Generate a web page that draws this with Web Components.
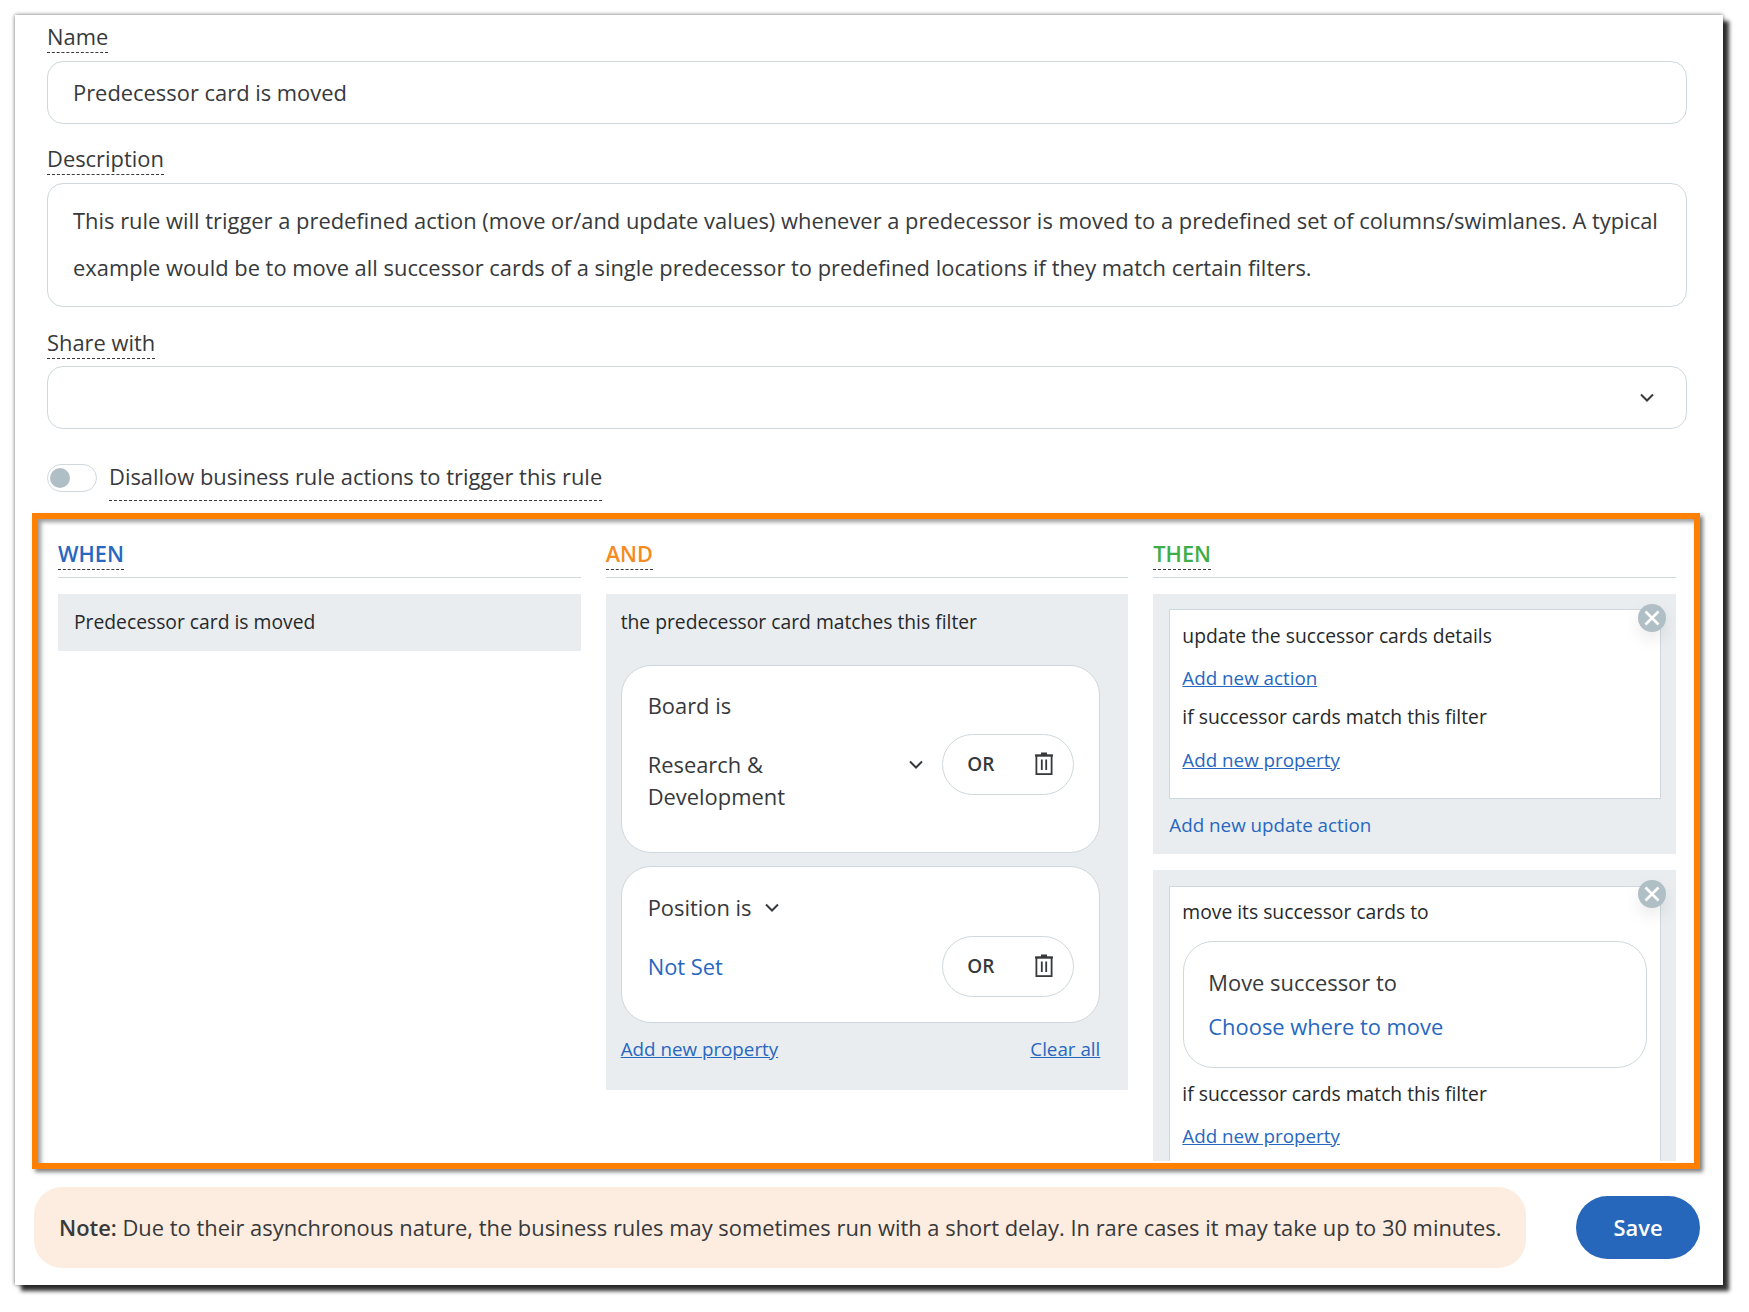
<!DOCTYPE html>
<html lang="en">
<head>
<meta charset="utf-8">
<title>Business rule</title>
<style>
    html, body { margin: 0; background: #fff; }
    body { display: flow-root; min-height: 1312px; font: 21.9px/32px "Open Sans", "Liberation Sans", sans-serif; color: #37393b; }
</style>
</head>
<body>
<rule-window>
    <rule-field label="Name" value="Predecessor card is moved" below="19" drop="8"></rule-field>
    <rule-field label="Description" multi below="20" drop="8" value="This rule will trigger a predefined action (move or/and update values) whenever a predecessor is moved to a predefined set of columns/swimlanes. A typical example would be to move all successor cards of a single predecessor to predefined locations if they match certain filters."></rule-field>
    <rule-field label="Share with" select below="0" drop="7"></rule-field>
    <rule-toggle>Disallow business rule actions to trigger this rule</rule-toggle>
    <rule-board>
        <rule-column heading="WHEN" color="#2767c0">
            <rule-panel plain>Predecessor card is moved</rule-panel>
        </rule-column>
        <rule-column heading="AND" color="#f58a1f">
            <rule-panel filter>
                <span class="title">the predecessor card matches this filter</span>
                <filter-card title="Board is" value="Research &amp; Development" value-chevron></filter-card>
                <filter-card title="Position is" value="Not Set" title-chevron link></filter-card>
                <panel-links></panel-links>
            </rule-panel>
        </rule-column>
        <rule-column heading="THEN" color="#3fae49">
            <action-panel footer="Add new update action" close-top="-6">
                <action-row strong>update the successor cards details</action-row>
                <action-row link gap="14">Add new action</action-row>
                <action-row strong gap="11">if successor cards match this filter</action-row>
                <action-row link gap="15" after="24">Add new property</action-row>
            </action-panel>
            <action-panel top="16" close-top="-7" second>
                <action-row strong first="11">move its successor cards to</action-row>
                <move-box></move-box>
                <action-row strong gap="12">if successor cards match this filter</action-row>
                <action-row link gap="14" after="40">Add new property</action-row>
            </action-panel>
        </rule-column>
    </rule-board>
    <rule-footer>
        <b>Note:</b> Due to their asynchronous nature, the business rules may sometimes run with a short delay. In rare cases it may take up to 30 minutes.
    </rule-footer>
</rule-window>

<script>
const CHEVRON = `<svg width="16" height="10" viewBox="0 0 16 10" fill="none" stroke="#37393b" stroke-width="2"><path d="M2 1.5 8 7.5 14 1.5"/></svg>`;
const TRASH = `<svg width="20" height="24" viewBox="0 0 20 24" fill="none" stroke="#37393b" stroke-width="1.8"><path d="M1 3.5H19M7 1.5H13"/><rect x="2.4" y="3.5" width="15.2" height="18.6"/><path d="M7.8 7.5V18M12.2 7.5V18"/></svg>`;
const DASHED = "border-bottom: 1px dashed #37393b;";

class BaseElement extends HTMLElement {
    constructor() {
        super();
        this.attachShadow({ mode: "open" });
    }

    connectedCallback() {
        this.shadowRoot.innerHTML = this.markup();
    }
}

class RuleWindow extends BaseElement {
    markup() {
        return `
            <style>
                :host {
                    display: block;
                    box-sizing: border-box;
                    width: 1708px;
                    height: 1270px;
                    margin: 15px 0 0 15px;
                    padding-top: 6px;
                    background: #fff;
                    box-shadow: 6px 6px 4px rgba(0,0,0,0.8), 0 0 4px rgba(0,0,0,0.6);
                }
            </style>
            <slot></slot>
        `;
    }
}

class RuleField extends BaseElement {
    markup() {
        const multi = this.hasAttribute("multi");
        const select = this.hasAttribute("select");
        const value = this.getAttribute("value") || "";
        return `
            <style>
                :host { display: block; margin: 0 36px ${this.getAttribute("below")}px 32px; }
                label { display: inline-block; line-height: 30px; ${DASHED} }
                .box {
                    box-sizing: border-box;
                    height: ${multi ? 124 : 63}px;
                    margin-top: ${this.getAttribute("drop")}px;
                    padding: ${multi ? "13px" : "0"} 25px 0;
                    display: flex;
                    align-items: ${multi ? "flex-start" : "center"};
                    justify-content: ${select ? "flex-end" : "flex-start"};
                    border: 1px solid #cfd8dc;
                    border-radius: 16px;
                    line-height: ${multi ? 47 : 32}px;
                }
                svg { margin-right: 6px; }
            </style>
            <label>${this.getAttribute("label")}</label>
            <div class="box">${select ? CHEVRON : value}</div>
        `;
    }
}

class RuleToggle extends BaseElement {
    markup() {
        return `
            <style>
                :host { display: flex; align-items: center; gap: 12px; margin: 24px 0 12px 32px; }
                .track {
                    box-sizing: border-box;
                    width: 50px;
                    height: 28px;
                    margin-top: 2px;
                    display: flex;
                    align-items: center;
                    padding-left: 2px;
                    border: 1px solid #cfd8dc;
                    border-radius: 14px;
                }
                .knob { width: 20px; height: 20px; border-radius: 50%; background: #b0bec5; }
                .text { line-height: 47px; ${DASHED} }
            </style>
            <div class="track"><div class="knob"></div></div>
            <div class="text"><slot></slot></div>
        `;
    }
}

class RuleBoard extends BaseElement {
    markup() {
        return `
            <style>
                :host {
                    display: block;
                    box-sizing: border-box;
                    width: 1668px;
                    height: 656px;
                    margin-left: 17px;
                    padding: 0 18px 2px 20px;
                    border: 6px solid #ff7f00;
                    box-shadow: 3px 3px 4px rgba(0,0,0,0.5), inset 3px 3px 4px rgba(0,0,0,0.4);
                }
                .cols {
                    display: grid;
                    grid-template-columns: repeat(3, 1fr);
                    gap: 25px;
                    height: 100%;
                    overflow: hidden;
                    padding-top: 19px;
                    box-sizing: border-box;
                }
            </style>
            <div class="cols"><slot></slot></div>
        `;
    }
}

class RuleColumn extends BaseElement {
    markup() {
        return `
            <style>
                :host { display: block; min-width: 0; }
                .head { padding-bottom: 7px; margin-bottom: 16px; border-bottom: 1px solid #cfd8dc; }
                h2 {
                    display: inline-block;
                    margin: 0;
                    font-size: 21.7px;
                    font-weight: 600;
                    line-height: 30px;
                    color: ${this.getAttribute("color")};
                    ${DASHED}
                }
            </style>
            <div class="head"><h2>${this.getAttribute("heading")}</h2></div>
            <slot></slot>
        `;
    }
}

class RulePanel extends BaseElement {
    markup() {
        const filter = this.hasAttribute("filter");
        return `
            <style>
                :host {
                    display: block;
                    box-sizing: border-box;
                    background: #e9edf0;
                    font-size: 19.3px;
                    font-weight: 500;
                    color: #26282a;
                    line-height: 28px;
                    padding: ${filter ? "14px 28px 27px 15px" : "14px 16px 15px"};
                }
                ::slotted(.title) { display: block; margin-bottom: 29px; }
            </style>
            <slot></slot>
        `;
    }
}

class FilterCard extends BaseElement {
    markup() {
        const link = this.hasAttribute("link");
        const valueChevron = this.hasAttribute("value-chevron");
        return `
            <style>
                :host {
                    display: block;
                    box-sizing: border-box;
                    margin-bottom: 13px;
                    padding: ${link ? 25 : 24}px 25px 24px 26px;
                    background: #fff;
                    border: 1px solid #cfd8dc;
                    border-radius: 30px;
                    color: #37393b;
                    font-size: 21.9px;
                    font-weight: 400;
                    line-height: 32px;
                }
                .top { display: flex; align-items: center; gap: 12px; }
                .row { display: flex; align-items: flex-start; margin-top: 12px; }
                .value { flex: 1; padding: 15px 0; color: ${link ? "#2767c0" : "inherit"}; }
                .chev { height: 61px; display: flex; align-items: center; margin: 0 18px 0 10px; }
            </style>
            <div class="top">${this.getAttribute("title")}${this.hasAttribute("title-chevron") ? CHEVRON : ""}</div>
            <div class="row">
                <div class="value" style="max-width: ${valueChevron ? 230 : 300}px">${this.getAttribute("value")}</div>
                <div style="flex: 1"></div>
                ${valueChevron ? `<div class="chev">${CHEVRON}</div>` : ""}
                <or-pill></or-pill>
            </div>
        `;
    }
}

class OrPill extends BaseElement {
    markup() {
        return `
            <style>
                :host {
                    display: flex;
                    box-sizing: border-box;
                    flex: none;
                    width: 132px;
                    height: 61px;
                    align-items: center;
                    justify-content: space-between;
                    padding: 0 19px 2px 24px;
                    border: 1px solid #cfd8dc;
                    border-radius: 31px;
                    font-size: 19px;
                    font-weight: 600;
                }
                svg { display: block; }
            </style>
            <span>OR</span>${TRASH}
        `;
    }
}

class PanelLinks extends BaseElement {
    markup() {
        return `
            <style>
                :host { display: flex; justify-content: space-between; margin-top: -1px; font-size: 18.8px; font-weight: 400; }
                a { color: #2767c0; text-decoration: underline; }
            </style>
            <a>Add new property</a><a>Clear all</a>
        `;
    }
}

class ActionPanel extends BaseElement {
    markup() {
        const footer = this.getAttribute("footer");
        const second = this.hasAttribute("second");
        return `
            <style>
                :host {
                    display: block;
                    margin-top: ${this.getAttribute("top") || 0}px;
                    padding: ${second ? 16 : 15}px 15px 15px 16px;
                    background: #e9edf0;
                    font-size: 18.8px;
                    line-height: 28px;
                }
                .card {
                    position: relative;
                    padding: 0 13px 0 12px;
                    background: #fff;
                    border: 1px solid #cfd8dc;
                }
                .close {
                    position: absolute;
                    top: ${this.getAttribute("close-top")}px;
                    right: -6px;
                    width: 28px;
                    height: 28px;
                    border-radius: 50%;
                    background: #b0bec5;
                    box-shadow: 0 8px 16px rgba(0,0,0,0.08);
                }
                .close svg { display: block; }
                a { display: block; margin-top: 12px; color: #2767c0; }
            </style>
            <div class="card">
                <slot></slot>
                <div class="close"><svg width="28" height="28" fill="none" stroke="#fff" stroke-width="2.6"><path d="M7.5 7.5 20.5 20.5M20.5 7.5 7.5 20.5"/></svg></div>
            </div>
            ${footer ? `<a>${footer}</a>` : ""}
        `;
    }
}

class ActionRow extends BaseElement {
    markup() {
        const link = this.hasAttribute("link");
        const first = this.getAttribute("first");
        const gap = first || this.getAttribute("gap") || 12;
        return `
            <style>
                :host {
                    display: block;
                    margin: ${gap}px 0 ${this.getAttribute("after") || 0}px;
                    font-size: ${link ? 18.8 : 19.3}px;
                    font-weight: ${link ? 400 : 500};
                    color: ${link ? "#2767c0" : "#26282a"};
                    text-decoration: ${link ? "underline" : "none"};
                }
            </style>
            <slot></slot>
        `;
    }
}

class MoveBox extends BaseElement {
    markup() {
        return `
            <style>
                :host {
                    display: block;
                    box-sizing: border-box;
                    height: 127px;
                    margin: 15px 0 0 1px;
                    padding: 25px 24px 0;
                    border: 1px solid #cfd8dc;
                    border-radius: 30px;
                    font-size: 21.9px;
                    line-height: 32px;
                }
                div { margin-top: 12px; color: #2767c0; }
            </style>
            Move successor to
            <div>Choose where to move</div>
        `;
    }
}

class RuleFooter extends BaseElement {
    markup() {
        return `
            <style>
                :host { display: flex; align-items: center; margin: 18px 0 0 19px; }
                .note {
                    box-sizing: border-box;
                    width: 1492px;
                    height: 81px;
                    padding: 0 20px 0 25px;
                    display: flex;
                    align-items: center;
                    background: #fdece0;
                    border-radius: 28px;
                    white-space: nowrap;
                }
                .text { display: block; }
                ::slotted(b) { font-weight: 600; }
                button {
                    width: 124px;
                    height: 63px;
                    margin-left: 50px;
                    border: none;
                    border-radius: 32px;
                    background: #2666bb;
                    color: #fff;
                    font: 600 21.9px "Open Sans", sans-serif;
                }
            </style>
            <div class="note"><span class="text"><slot></slot></span></div>
            <button type="button">Save</button>
        `;
    }
}

customElements.define("rule-window", RuleWindow);
customElements.define("rule-field", RuleField);
customElements.define("rule-toggle", RuleToggle);
customElements.define("rule-board", RuleBoard);
customElements.define("rule-column", RuleColumn);
customElements.define("rule-panel", RulePanel);
customElements.define("filter-card", FilterCard);
customElements.define("or-pill", OrPill);
customElements.define("panel-links", PanelLinks);
customElements.define("action-panel", ActionPanel);
customElements.define("action-row", ActionRow);
customElements.define("move-box", MoveBox);
customElements.define("rule-footer", RuleFooter);
</script>
</body>
</html>
